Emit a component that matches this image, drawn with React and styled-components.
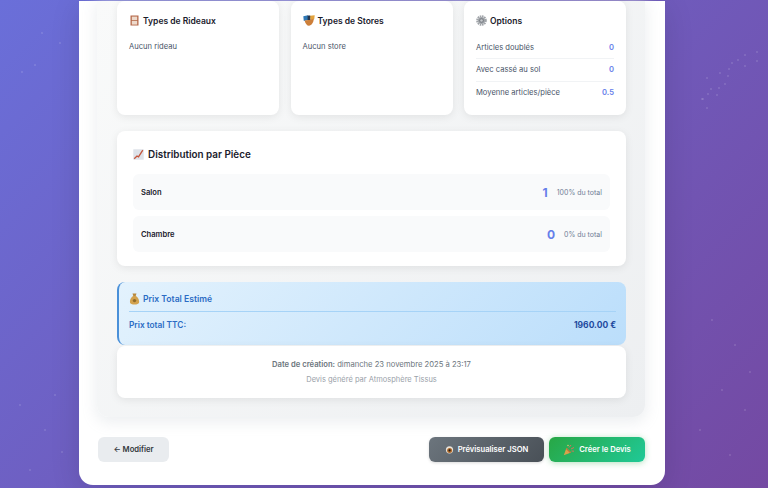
import React from 'react';
import styled, { createGlobalStyle } from 'styled-components';

const GlobalStyle = createGlobalStyle`
  html, body {
    margin: 0;
    height: 488px;
    overflow: hidden;
  }
  body {
    font-family: Inter, "Liberation Sans", sans-serif;
    -webkit-font-smoothing: antialiased;
  }
`;

function WindowIcon() {
  return (
    <svg width="11" height="11" viewBox="0 0 11 11">
      <rect x="1.5" y="0.5" width="8" height="10" fill="#b5694a" />
      <rect x="2.8" y="1.6" width="5.4" height="3.6" fill="#edd9cb" />
      <rect x="2.8" y="6" width="5.4" height="3.6" fill="#edd9cb" />
    </svg>
  );
}

function StoreIcon() {
  return (
    <svg width="12" height="11" viewBox="0 0 12 11">
      <path d="M0.3 1.2 L5 0.3 L5.4 5 L0.8 6 Z" fill="#2f78b5" />
      <path d="M7 0.8 L11.7 0.3 L11.2 4.2 L7.3 5 Z" fill="#e2a23b" />
      <path d="M1.6 5.4 L5.5 5 L10.8 3.8 C10.6 7.5 8.6 10.7 6 10.7 C4 10.7 2.4 8.5 1.6 5.4 Z" fill="#cd7f3a" />
      <rect x="4.6" y="0.5" width="2.6" height="4.5" fill="#25354d" />
    </svg>
  );
}

function GearIcon() {
  return (
    <svg width="11" height="11" viewBox="0 0 11 11">
      <circle cx="5.5" cy="5.5" r="4.4" fill="none" stroke="#a0a4a9" strokeWidth="1.8" strokeDasharray="1.6 0.7" />
      <circle cx="5.5" cy="5.5" r="3.6" fill="#a0a4a9" />
      <circle cx="5.5" cy="5.5" r="2.3" fill="#777c83" />
      <circle cx="5.5" cy="5.5" r="1.3" fill="#c5c8cc" />
    </svg>
  );
}

function ChartIcon() {
  return (
    <svg width="11" height="11" viewBox="0 0 11 11">
      <rect x="0.3" y="0.3" width="10.4" height="10.4" fill="#dde2e9" />
      <path d="M1.2 9.8 L4 7 L5.5 7.8 L9.8 1.2" fill="none" stroke="#c4553c" strokeWidth="1.3" />
    </svg>
  );
}

function MoneyIcon() {
  return (
    <svg width="11" height="12" viewBox="0 0 11 12">
      <path d="M3.5 0.5 L7.5 0.5 L6.7 3 L4.3 3 Z" fill="#b98a3e" />
      <path d="M4 3 C1.5 5 0.5 7.5 1 9.5 C1.4 11 3 11.5 5.5 11.5 C8 11.5 9.6 11 10 9.5 C10.5 7.5 9.5 5 7 3 Z" fill="#d2a24f" />
      <circle cx="5.5" cy="7.6" r="1.7" fill="#8d6a2c" />
    </svg>
  );
}

function EyeIcon() {
  return (
    <svg width="9" height="9" viewBox="0 0 9 9">
      <circle cx="4.5" cy="4.8" r="3.6" fill="#e8e3da" />
      <circle cx="4.6" cy="5.4" r="2.5" fill="#b06a2b" />
      <circle cx="4.6" cy="5.4" r="1.1" fill="#1f1a16" />
    </svg>
  );
}

function PartyIcon() {
  return (
    <svg width="12" height="12" viewBox="0 0 12 12">
      <path d="M0.8 11.2 L3.5 3.8 L8.2 8.5 Z" fill="#d9a24a" />
      <path d="M3.5 3.8 L8.2 8.5 L7 9 L3 5 Z" fill="#b5763a" />
      <path d="M6 3.5 L8 1 M8 5 L11 3.5 M8.5 7 L11 7.2" stroke="#e9695a" strokeWidth="0.9" />
      <circle cx="5" cy="1.5" r="0.7" fill="#f2d36a" />
    </svg>
  );
}

const stats = [
  { label: 'Articles doublés', value: '0' },
  { label: 'Avec cassé au sol', value: '0' },
  { label: 'Moyenne articles/pièce', value: '0.5' },
];

const rooms = [
  { name: 'Salon', count: 1, share: '100% du total' },
  { name: 'Chambre', count: 0, share: '0% du total' },
];

// faint specks that sit on the purple background
const specks = [
  [757, 52], [745, 55], [738, 60], [732, 63], [757, 61], [745, 66], [729, 69], [720, 73], [728, 76],
  [707, 78], [719, 88], [725, 84], [711, 89], [703, 99], [708, 94], [717, 95], [707, 108], [702, 99],
  [42, 33], [60, 43], [22, 72], [35, 65], [712, 320], [735, 345], [750, 372], [722, 390], [745, 410],
  [700, 430], [730, 455], [20, 405], [45, 430], [62, 452], [30, 470], [55, 395],
];

const speckLayers = specks
  .map(([x, y]) => `radial-gradient(circle at ${x}px ${y}px, rgba(255, 255, 255, 0.13) 0.6px, transparent 1.2px)`)
  .join(', ');

export default function App() {
  return (
    <>
      <GlobalStyle />
      <Page>
        <Container>
          <Panel>
            <CardGrid>
              <Card>
                <CardTitle><WindowIcon /> Types de Rideaux</CardTitle>
                <EmptyText>Aucun rideau</EmptyText>
              </Card>
              <Card>
                <CardTitle><StoreIcon /> Types de Stores</CardTitle>
                <EmptyText>Aucun store</EmptyText>
              </Card>
              <Card>
                <CardTitle><GearIcon /> Options</CardTitle>
                <StatList>
                  {stats.map((s) => (
                    <StatRow key={s.label}>
                      <span>{s.label}</span>
                      <StatValue>{s.value}</StatValue>
                    </StatRow>
                  ))}
                </StatList>
              </Card>
            </CardGrid>

            <Distribution>
              <SectionTitle><ChartIcon /> Distribution par Pièce</SectionTitle>
              <RoomList>
                {rooms.map((r) => (
                  <RoomRow key={r.name}>
                    <RoomName>{r.name}</RoomName>
                    <RoomCount>{r.count}</RoomCount>
                    <RoomShare>{r.share}</RoomShare>
                  </RoomRow>
                ))}
              </RoomList>
            </Distribution>

            <TotalGroup>
              <TotalBox>
                <TotalTitle><MoneyIcon /> Prix Total Estimé</TotalTitle>
                <TotalRow>
                  <span>Prix total TTC:</span>
                  <TotalAmount>1960.00 €</TotalAmount>
                </TotalRow>
              </TotalBox>
              <Footer>
                <FooterDate><strong>Date de création:</strong> dimanche 23 novembre 2025 à 23:17</FooterDate>
                <FooterNote>Devis généré par Atmosphère Tissus</FooterNote>
              </Footer>
            </TotalGroup>
          </Panel>

          <Actions>
            <BackButton>← Modifier</BackButton>
            <ActionsRight>
              <PreviewButton><EyeIcon /> Prévisualiser JSON</PreviewButton>
              <CreateButton><PartyIcon /> Créer le Devis</CreateButton>
            </ActionsRight>
          </Actions>
        </Container>
      </Page>
    </>
  );
}

const Page = styled.div`
  height: 488px;
  box-sizing: border-box;
  padding: 0 103px 3px 79px;
  display: flex;
  flex-direction: column;
  justify-content: flex-end;
  overflow: hidden;
  background: ${speckLayers}, linear-gradient(135deg, #6a6fd9 0%, #7449a2 100%);
`;

const Container = styled.div`
  background: #ffffff;
  border-radius: 0 0 14px 14px;
  padding: 0 20px 23px 18px;
  box-shadow: 0 6px 30px rgba(0, 0, 0, 0.12);
`;

const Panel = styled.div`
  background: linear-gradient(135deg, #f9fafa 0%, #edeff1 100%);
  border-radius: 0 0 12px 12px;
  padding: 0 19px 19px 20px;
  box-shadow: 0 4px 14px 2px rgba(236, 238, 241, 0.9);
`;

const CardGrid = styled.div`
  display: grid;
  grid-template-columns: 162px 162px 162px;
  justify-content: space-between;
  margin-bottom: 16px;
`;

const Card = styled.div`
  height: 114px;
  box-sizing: border-box;
  padding: 12.5px 12px;
  background: #ffffff;
  border-radius: 8px;
  box-shadow: 0 2px 8px rgba(0, 0, 0, 0.08);
`;

const CardTitle = styled.div`
  display: flex;
  align-items: center;
  gap: 3px;
  height: 14px;
  margin-bottom: 12.5px;
  font-size: 8.5px;
  font-weight: 600;
  color: #1a202c;
`;

const EmptyText = styled.div`
  font-size: 7.6px;
  line-height: 13px;
  color: #4a5568;
`;

const StatList = styled.div`
  display: flex;
  flex-direction: column;
`;

const StatRow = styled.div`
  display: flex;
  justify-content: space-between;
  align-items: center;
  height: 22px;
  margin-top: -4px;
  margin-bottom: 3.6px;
  font-size: 7.6px;
  color: #4a5568;
  border-bottom: 1px solid #f1f3f5;
  &:last-child {
    border-bottom: none;
  }
`;

const StatValue = styled.span`
  font-weight: 600;
  color: #667eea;
`;

const Distribution = styled.div`
  height: 135px;
  box-sizing: border-box;
  padding: 15.5px 16px 16px;
  margin-bottom: 16px;
  background: #ffffff;
  border-radius: 8px;
  box-shadow: 0 2px 8px rgba(0, 0, 0, 0.08);
`;

const SectionTitle = styled.div`
  display: flex;
  align-items: center;
  gap: 4px;
  height: 15px;
  margin-bottom: 12.5px;
  font-size: 9.9px;
  font-weight: 600;
  color: #1a202c;
`;

const RoomList = styled.div`
  display: flex;
  flex-direction: column;
  gap: 6px;
`;

const RoomRow = styled.div`
  display: flex;
  align-items: center;
  height: 36px;
  box-sizing: border-box;
  padding: 0 8px;
  background: #f9fafb;
  border-radius: 6px;
`;

const RoomName = styled.span`
  flex: 1;
  font-size: 7.6px;
  font-weight: 600;
  color: #1a202c;
`;

const RoomCount = styled.span`
  margin-right: 9px;
  font-size: 12px;
  font-weight: 700;
  color: #667eea;
`;

const RoomShare = styled.span`
  font-size: 7px;
  color: #718096;
`;

const TotalGroup = styled.div`
  display: flex;
  flex-direction: column;
`;

const TotalBox = styled.div`
  height: 63px;
  box-sizing: border-box;
  padding: 8px 10px 0;
  background: linear-gradient(135deg, #e3f2fd 0%, #bbdefb 100%);
  border-left: 2px solid #4a90d9;
  border-radius: 8px;
`;

const TotalTitle = styled.div`
  display: flex;
  align-items: center;
  gap: 3px;
  height: 18px;
  padding-bottom: 3px;
  border-bottom: 1px solid #a6d3f7;
  font-size: 8.6px;
  font-weight: 600;
  color: #2b6cc4;
`;

const TotalRow = styled.div`
  display: flex;
  justify-content: space-between;
  align-items: center;
  height: 26px;
  font-size: 8.3px;
  font-weight: 600;
  color: #2b6cc4;
`;

const TotalAmount = styled.span`
  font-size: 8.5px;
  font-weight: 700;
  color: #1e4a9e;
`;

const Footer = styled.div`
  height: 52px;
  margin-top: 1px;
  box-sizing: border-box;
  padding-top: 12px;
  background: #ffffff;
  border-radius: 8px;
  text-align: center;
  box-shadow: 0 2px 8px rgba(0, 0, 0, 0.08);
`;

const FooterDate = styled.div`
  font-size: 7.65px;
  line-height: 13px;
  color: #6c757d;
  strong {
    font-weight: 600;
  }
`;

const FooterNote = styled.div`
  margin-top: 3px;
  font-size: 7.5px;
  line-height: 12px;
  color: #9aa1a9;
`;

const Actions = styled.div`
  display: flex;
  justify-content: space-between;
  align-items: center;
  margin-top: 20px;
  padding-left: 1px;
`;

const ActionsRight = styled.div`
  display: flex;
  gap: 5px;
`;

const Button = styled.button`
  display: flex;
  align-items: center;
  justify-content: center;
  gap: 4px;
  height: 25px;
  padding: 0;
  border: none;
  border-radius: 6px;
  font-family: inherit;
  font-size: 7.65px;
  font-weight: 600;
`;

const BackButton = styled(Button)`
  width: 71px;
  background: #e9ecef;
  color: #343a40;
`;

const PreviewButton = styled(Button)`
  width: 115px;
  color: #ffffff;
  background: linear-gradient(135deg, #6c757d 0%, #495057 100%);
  box-shadow: 0 1px 3px rgba(0, 0, 0, 0.15);
`;

const CreateButton = styled(Button)`
  width: 96px;
  color: #ffffff;
  background: linear-gradient(135deg, #28a745 0%, #20c997 100%);
  box-shadow: 0 1px 6px rgba(40, 167, 69, 0.35);
`;
